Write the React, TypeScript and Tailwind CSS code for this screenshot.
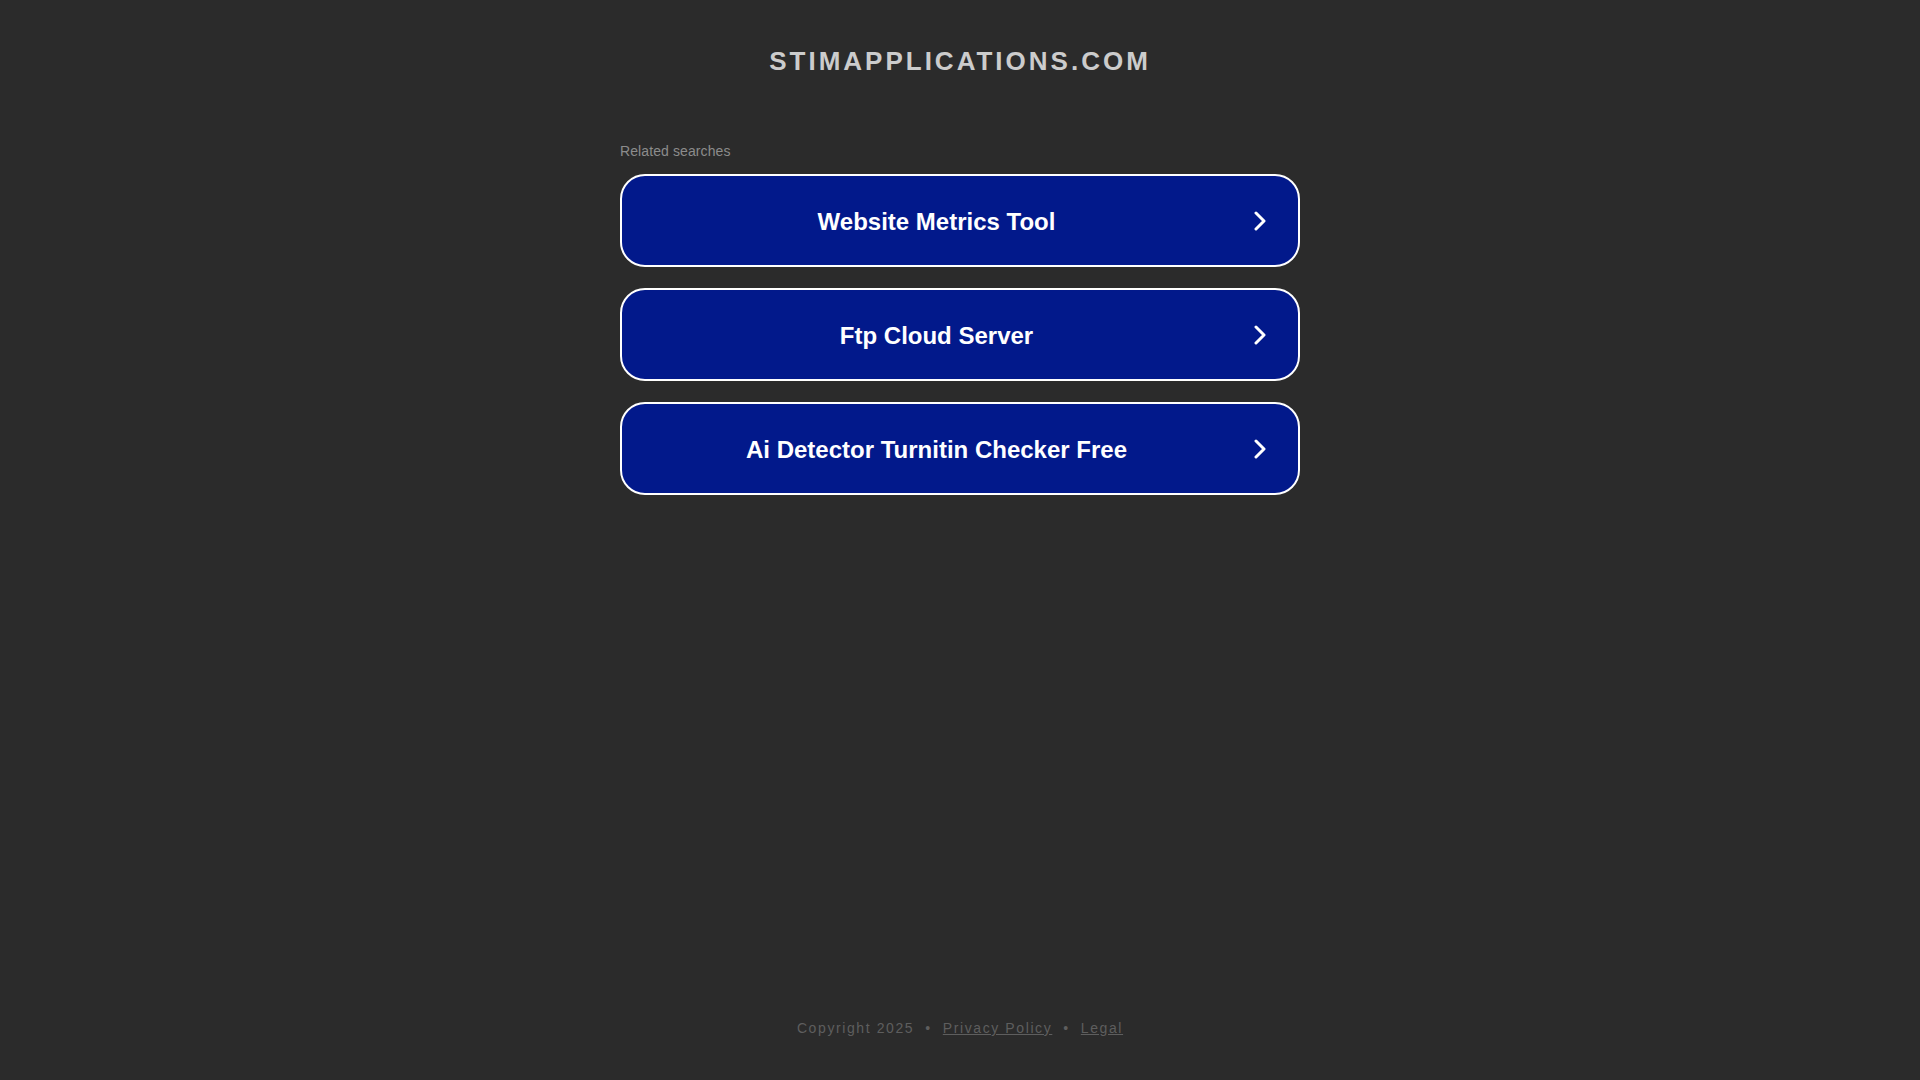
import React from "react";

const searches = [
  "Website Metrics Tool",
  "Ftp Cloud Server",
  "Ai Detector Turnitin Checker Free",
];

function Chevron() {
  return (
    <svg width="14" height="20" viewBox="0 0 14 20" fill="none" className="shrink-0">
      <polyline
        points="3,2 11,10 3,18"
        stroke="#ffffff"
        strokeWidth="3"
        strokeLinecap="round"
        strokeLinejoin="round"
      />
    </svg>
  );
}

export default function App() {
  return (
    <div className="flex h-screen flex-col bg-[#2b2b2b] font-['Liberation_Sans',Arial,sans-serif]">
      {/* Header */}
      <header className="pt-[45px] text-center">
        <h1 className="text-[26px] leading-[32px] font-bold tracking-[3px] text-[#cccccc]">
          STIMAPPLICATIONS.COM
        </h1>
      </header>

      {/* Related searches */}
      <main className="mx-auto mt-[64px] w-[680px]">
        <p className="text-[14px] leading-[20px] tracking-[0.1px] text-[#8c8c8c]">Related searches</p>
        <div className="mt-[13px] flex flex-col gap-[21px]">
          {searches.map((s) => (
            <a
              key={s}
              href="#"
              className="flex h-[93px] items-center rounded-[25px] border-2 border-white bg-[#02198b] pl-[20px] pr-[31px]"
            >
              <span className="flex-1 pt-[2px] text-center text-[24px] leading-[30px] font-bold text-white">
                {s}
              </span>
              <span className="ml-[22px]">
                <Chevron />
              </span>
            </a>
          ))}
        </div>
      </main>

      {/* Footer */}
      <footer className="mt-auto pb-[42px] text-center text-[14px] leading-[20px] tracking-[1.6px] text-[#5e5e5e]">
        <span>Copyright 2025</span>
        <span className="mx-[11px]">•</span>
        <a href="#" className="underline">
          Privacy Policy
        </a>
        <span className="mx-[11px]">•</span>
        <a href="#" className="underline">
          Legal
        </a>
      </footer>
    </div>
  );
}
